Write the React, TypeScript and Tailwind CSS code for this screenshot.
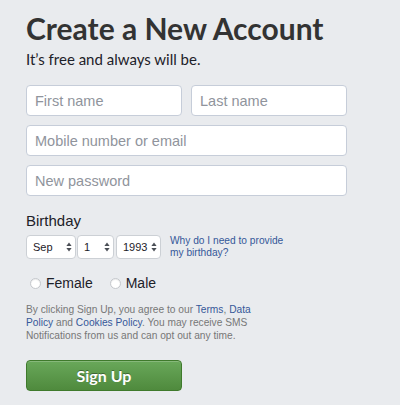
import React from "react";

const SelectArrows = () => (
  <svg width="6" height="10" viewBox="0 0 6 10" className="shrink-0">
    <path d="M3 0.5 L5.6 4 H0.4 Z" fill="#4b4f56" />
    <path d="M3 9.5 L5.6 6 H0.4 Z" fill="#4b4f56" />
  </svg>
);

const FakeSelect = ({ value, width, className = "" }: { value: string; width: string; className?: string }) => (
  <div
    className={`${width} ${className} h-[24px] flex items-center justify-between pl-[6px] pr-[3px] bg-white border border-[#ccd0d5] rounded-[4px] text-[11px] text-[#1d2129]`}
  >
    <span>{value}</span>
    <SelectArrows />
  </div>
);

const Radio = ({ label }: { label: string }) => (
  <label className="flex items-center gap-[5px] text-[14px] text-[#1d2129]">
    <span className="w-[11px] h-[11px] rounded-full bg-white border border-[#c4c7cc] shadow-[inset_0_1px_1px_rgba(0,0,0,0.08)]" />
    {label}
  </label>
);

const TextInput = ({ placeholder, className = "" }: { placeholder: string; className?: string }) => (
  <input
    placeholder={placeholder}
    className={`${className} h-[31px] px-[8px] bg-white border border-[#c6cdd9] rounded-[4px] text-[14.5px] text-[#1d2129] placeholder:text-[#90949c] outline-none`}
  />
);

export default function App() {
  return (
    <div
      className="w-[400px] h-[405px] bg-[#e9ebee] pl-[26px] overflow-hidden"
      style={{ fontFamily: '"Liberation Sans", Arial, sans-serif' }}
    >
      <h1 className="mt-[10px] text-[30px] leading-[36px] font-bold text-[#333] font-['Lato',sans-serif]">
        Create a New Account
      </h1>
      <p className="mt-[3px] text-[15px] leading-[20px] text-[#1d2129] font-['Lato',sans-serif]">
        It’s free and always will be.
      </p>

      <div className="mt-[16px] w-[321px] flex flex-col gap-[9px]">
        <div className="flex gap-[9px]">
          <TextInput placeholder="First name" className="w-[156px]" />
          <TextInput placeholder="Last name" className="w-[156px]" />
        </div>
        <TextInput placeholder="Mobile number or email" className="w-full" />
        <TextInput placeholder="New password" className="w-full" />
      </div>

      <div className="mt-[16px] text-[15px] leading-[18px] text-[#1d2129]">Birthday</div>
      <div className="mt-[5px] flex items-start">
        <FakeSelect value="Sep" width="w-[50px]" />
        <FakeSelect value="1" width="w-[37px]" className="ml-[1px]" />
        <FakeSelect value="1993" width="w-[45px]" className="ml-[2px]" />
        <a className="ml-[9px] text-[10.2px] leading-[12px] text-[#365899]">
          Why do I need to provide
          <br />
          my birthday?
        </a>
      </div>

      <div className="mt-[14px] h-[20px] flex items-center gap-[17px] pl-[4px]">
        <Radio label="Female" />
        <Radio label="Male" />
      </div>

      <p className="mt-[10px] text-[10.2px] leading-[13px] text-[#777]">
        By clicking Sign Up, you agree to our <a className="text-[#365899]">Terms</a>,{" "}
        <a className="text-[#365899]">Data</a>
        <br />
        <a className="text-[#365899]">Policy</a> and <a className="text-[#365899]">Cookies Policy</a>. You may receive SMS
        <br />
        Notifications from us and can opt out any time.
      </p>

      <button className="mt-[18px] w-[156px] h-[31px] rounded-[4px] border border-[#3f7a2c] bg-gradient-to-b from-[#69a85a] to-[#4f8a3d] text-white text-[16px] font-bold font-['Lato',sans-serif] [text-shadow:0_-1px_0_rgba(0,0,0,0.35)] shadow-[inset_0_1px_0_rgba(255,255,255,0.2)]">
        Sign Up
      </button>
    </div>
  );
}
